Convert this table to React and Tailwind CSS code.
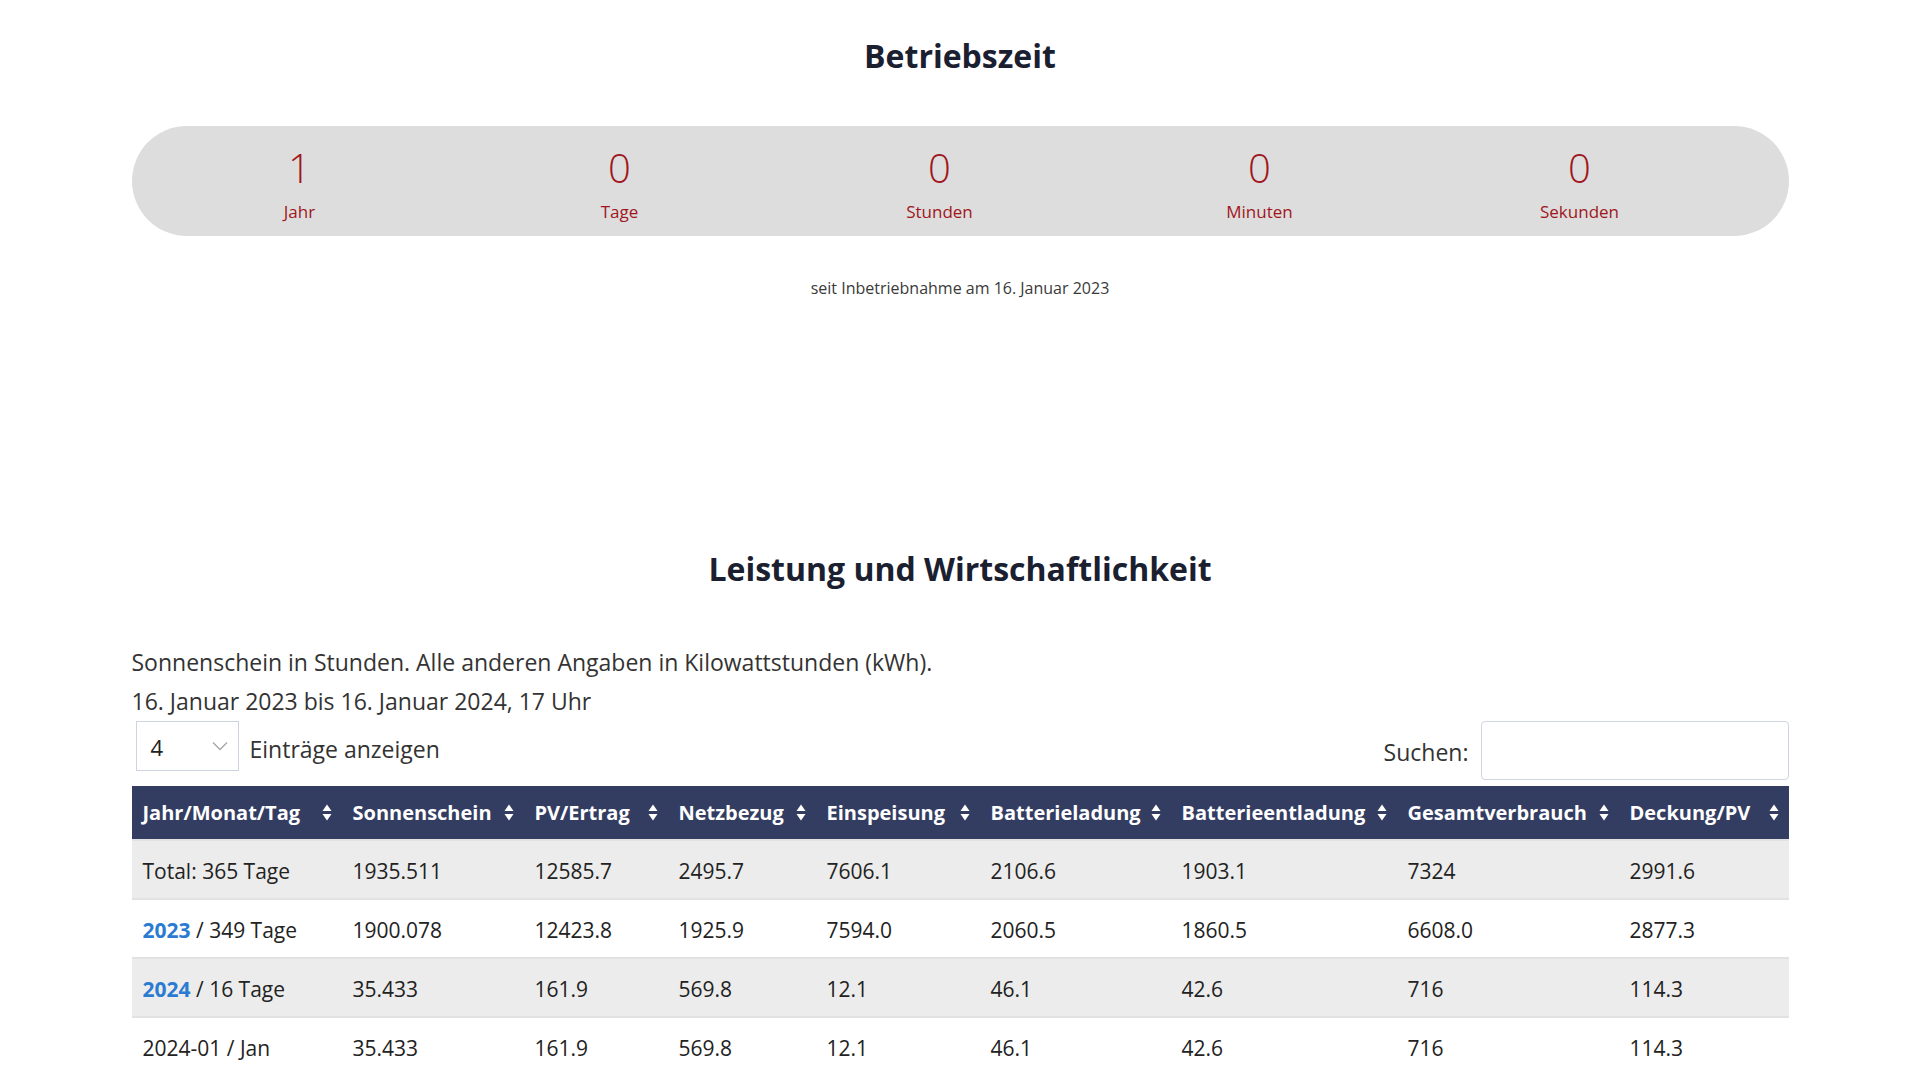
const units = [
  { value: 1, label: "Jahr" },
  { value: 0, label: "Tage" },
  { value: 0, label: "Stunden" },
  { value: 0, label: "Minuten" },
  { value: 0, label: "Sekunden" },
];

const columns = [
  { title: "Jahr/Monat/Tag", width: "w-[210px]" },
  { title: "Sonnenschein", width: "w-[182px]" },
  { title: "PV/Ertrag", width: "w-[144px]" },
  { title: "Netzbezug", width: "w-[148px]" },
  { title: "Einspeisung", width: "w-[164px]" },
  { title: "Batterieladung", width: "w-[191px]" },
  { title: "Batterieentladung", width: "w-[226px]" },
  { title: "Gesamtverbrauch", width: "w-[222px]" },
  { title: "Deckung/PV", width: "w-[170px]" },
];

const rows = [
  { label: "Total: 365 Tage", values: ["1935.511", "12585.7", "2495.7", "7606.1", "2106.6", "1903.1", "7324", "2991.6"] },
  { year: "2023", rest: " / 349 Tage", values: ["1900.078", "12423.8", "1925.9", "7594.0", "2060.5", "1860.5", "6608.0", "2877.3"] },
  { year: "2024", rest: " / 16 Tage", values: ["35.433", "161.9", "569.8", "12.1", "46.1", "42.6", "716", "114.3"] },
  { label: "2024-01 / Jan", values: ["35.433", "161.9", "569.8", "12.1", "46.1", "42.6", "716", "114.3"] },
];

const SortIcon = () => (
  <svg width="10" height="19" viewBox="0 0 10 19" className="shrink-0 ml-2">
    <path d="M0.5 8 L5 1.5 L9.5 8 Z" fill="#ffffff" />
    <path d="M0.5 11 L9.5 11 L5 17.5 Z" fill="#ffffff" />
  </svg>
);

const App = () => {
  return (
    <div className="min-h-screen bg-white font-['Open_Sans',sans-serif] text-[#222222]">
      <div className="w-[1657px] mx-auto">
        {/* Betriebszeit */}
        <h2 className="pt-[34px] text-center text-[32px] leading-[44px] font-bold text-[#1b2030]">
          Betriebszeit
        </h2>

        <div className="mt-[48px] h-[110px] rounded-full bg-[#dddddd] flex pl-[8px]">
          {units.map((u) => (
            <div key={u.label} className="w-[320px] flex flex-col items-center pt-[22px] text-[#a0161c]">
              <span className="text-[40px] leading-[40px] font-light">{u.value}</span>
              <span className="mt-[12px] text-[17px] leading-[24px]">{u.label}</span>
            </div>
          ))}
        </div>

        <p className="mt-[42px] text-center text-[16px] leading-[20px] text-[#3a3a3a]">
          seit Inbetriebnahme am 16. Januar 2023
        </p>

        {/* Leistung und Wirtschaftlichkeit */}
        <h2 className="mt-[249px] text-center text-[32px] leading-[44px] font-bold text-[#1b2030]">
          Leistung und Wirtschaftlichkeit
        </h2>

        <div className="mt-[52px] text-[23px] leading-[39px] text-[#333333]">
          <p>Sonnenschein in Stunden. Alle anderen Angaben in Kilowattstunden (kWh).</p>
          <p>16. Januar 2023 bis 16. Januar 2024, 17 Uhr</p>
        </div>

        <div className="flex justify-between items-start">
          <div className="flex items-center">
            <div className="ml-[4px] w-[103px] h-[50px] border border-[#cdd4df] flex items-center justify-between pl-[14px] pr-[10px] text-[22px]">
              <span className="pt-[3px]">4</span>
              <svg width="16" height="10" viewBox="0 0 16 10">
                <path d="M1 1.5 L8 8.5 L15 1.5" fill="none" stroke="#a6a6a6" strokeWidth="1.3" />
              </svg>
            </div>
            <span className="ml-[11px] pt-[6px] text-[23px] text-[#333333]">Einträge anzeigen</span>
          </div>
          <div className="flex items-center">
            <span className="mr-[12px] pt-[4px] text-[23px] text-[#333333]">Suchen:</span>
            <input
              type="text"
              className="w-[308px] h-[59px] border border-[#cfd6e1] rounded-[4px] outline-none px-3"
            />
          </div>
        </div>

        <table className="mt-[6px] w-full table-fixed border-collapse text-[21px]">
          <thead>
            <tr className="bg-[#333d62] text-white h-[54px]">
              {columns.map((c) => (
                <th key={c.title} className={`${c.width} p-0 font-bold text-left text-[20px]`}>
                  <div className="flex items-center justify-between pl-[11px] pr-[10px] whitespace-nowrap">
                    <span>{c.title}</span>
                    <SortIcon />
                  </div>
                </th>
              ))}
            </tr>
          </thead>
          <tbody>
            {rows.map((r, i) => (
              <tr
                key={i}
                className={`h-[59px] border-t-2 border-[#e2e2e2] ${i % 2 === 0 ? "bg-[#ececec]" : "bg-white"}`}
              >
                <td className="pl-[11px] pt-[4px] whitespace-nowrap">
                  {r.year ? (
                    <>
                      <a href="#" className="font-bold text-[#2b7bd2]">{r.year}</a>
                      {r.rest}
                    </>
                  ) : (
                    r.label
                  )}
                </td>
                {r.values.map((v, j) => (
                  <td key={j} className="pl-[11px] pt-[4px]">{v}</td>
                ))}
              </tr>
            ))}
          </tbody>
        </table>
      </div>
    </div>
  );
};

export default App;
